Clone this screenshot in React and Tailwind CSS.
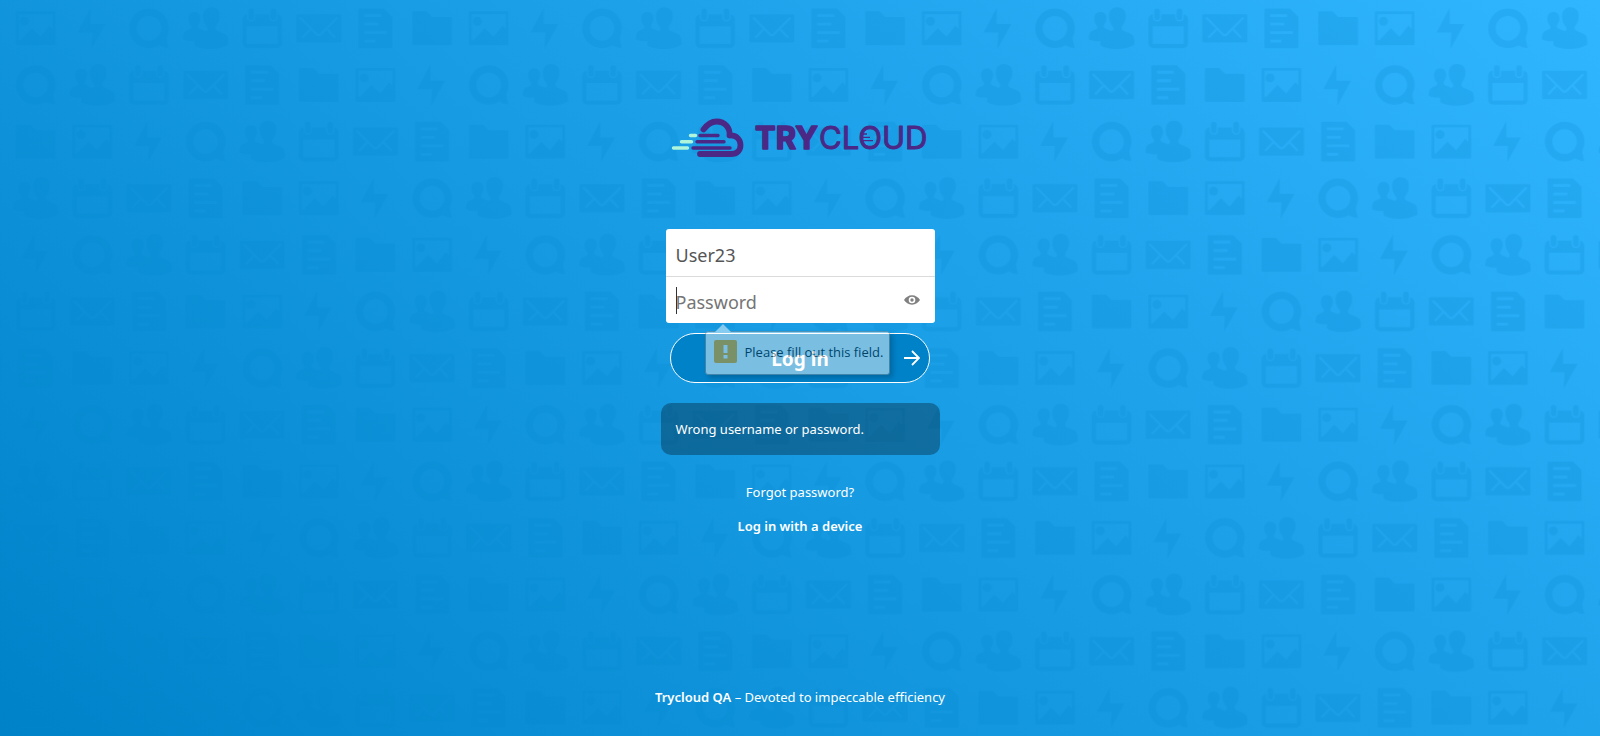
import React from "react";

const KINDS = ["image", "bolt", "talk", "contacts", "calendar", "mail", "doc", "folder"];
const ROW_OFFSETS = [0, 2, 7, 3, 1, 4, 6, 1, 3, 5, 7, 2, 6, 0, 4];
const COLS = 24;
const PATTERN_WIDTH = 1359;
const CELL = PATTERN_WIDTH / COLS;
const ICON_SCALE = CELL / 20;

function PatternIcons() {
  return (
    <>
      <path
        id="bg-image"
        fillRule="evenodd"
        d="M1.4 2h13.2q.4 0 .4.4v11.2q0 .4-.4.4H1.4q-.4 0-.4-.4V2.4q0-.4.4-.4ZM2 3v9.2h.6L6.6 8l3.1 3L12.9 7 14 8.2V3ZM4 3.9a1.6 1.6 0 1 0 .01 0Z"
      />
      <path id="bg-bolt" d="M7.4.8 2.8 9.5H8l-.3 5.8 4.9-8.8H7.4Z" />
      <path
        id="bg-talk"
        fillRule="evenodd"
        d="M8 1a7 7 0 1 0 3.7 12.95c1 .6 2.4 1 3.2.95.3-.2-.7-2-.6-3.8A7 7 0 0 0 8 1Zm0 2.65a4.35 4.35 0 1 1 0 8.7 4.35 4.35 0 0 1 0-8.7Z"
      />
      <path
        id="bg-contacts"
        d="M10 .6c2 0 3.1 1.3 3 3.2 0 1.5-.6 2.5-1.3 3.5-.3.6-.2 1.1.3 1.5 1.2.7 3 1 3.7 2 .3.9.4 2 .3 3-1.5 1-3.7 1.5-6.2 1.5-2.3 0-4.6-.4-5.7-1.3-.1-.5-.1-1 0-1.5-1.5.1-2.9-.1-4.1-.6 0-.9.1-1.8.5-2.5.7-.7 1.7-.8 2.4-1.3.3-.5-.1-1-.5-1.6-.3-.5-.5-1.1-.5-1.9 0-1.5.8-2.4 2.2-2.4 1.3 0 2.1.9 2.1 2.3 0 .9-.3 1.5-.7 2.1-.3.6-.4 1 .1 1.4.6.4 1.6.5 2.3 1 .6-.2 1-.5.7-1.3-.8-1.1-1.5-2.2-1.5-3.8C7.1 1.8 8.2.6 10 .6Z"
      />
      <mask id="cut-calendar">
        <rect width="16" height="16" fill="white" />
        <rect x="2.5" y="7.3" width="11" height="6.2" fill="black" />
        <rect x="2.6" y=".6" width="3" height="5" rx="1.5" fill="black" />
        <rect x="10.5" y=".6" width="3" height="5" rx="1.5" fill="black" />
      </mask>
      <g id="bg-calendar">
        <rect x="1" y="3" width="14" height="12" rx="1.8" mask="url(#cut-calendar)" />
        <rect x="3.1" y="1" width="2" height="4.1" rx="1" />
        <rect x="11" y="1" width="2" height="4.1" rx="1" />
      </g>
      <mask id="cut-mail">
        <rect width="16" height="16" fill="white" />
        <path
          d="M1.4 4.2 7.3 10.1Q8 10.7 8.7 10.1L14.6 4.2M5 8.4 2.2 11.3M11 8.4 13.8 11.3"
          fill="none"
          stroke="black"
          strokeWidth=".8"
        />
      </mask>
      <rect id="bg-mail" y="3" width="16" height="10" rx=".6" mask="url(#cut-mail)" />
      <path
        id="bg-doc"
        fillRule="evenodd"
        d="M2.4 1H11l3 3v10.6q0 .4-.4.4H2.4Q2 15 2 14.6V1.4Q2 1 2.4 1ZM4 3v1h6V3ZM4 6v1h5V6ZM4 9v1h8V9ZM4 12v1h4v-1Z"
      />
      <path id="bg-folder" d="M1.4 2H6l2 2h6.6q.4 0 .4.4v9.2q0 .4-.4.4H1.4Q1 14 1 13.6V2.4Q1 2 1.4 2Z" />
    </>
  );
}

function Background() {
  return (
    <svg className="absolute inset-0 h-full w-full" aria-hidden="true">
      <defs>
        <PatternIcons />
        <pattern id="bg-pattern" width={PATTERN_WIDTH} height={CELL * ROW_OFFSETS.length} patternUnits="userSpaceOnUse" x="7.4">
          <g fill="#0082c9" opacity=".19">
            {ROW_OFFSETS.map((offset, row) =>
              Array.from({ length: COLS }, (_, col) => (
                <use
                  key={`${row}-${col}`}
                  href={`#bg-${KINDS[(col + offset) % 8]}`}
                  transform={`translate(${(col + 0.1) * CELL} ${(row + 0.1) * CELL}) scale(${ICON_SCALE})`}
                />
              ))
            )}
          </g>
        </pattern>
      </defs>
      <rect width="100%" height="100%" fill="url(#bg-pattern)" />
    </svg>
  );
}

function Logo() {
  return (
    <svg viewBox="0 0 262 44" className="h-11 w-[262px]" role="img" aria-label="Trycloud">
      <g fill="none" strokeLinecap="round" stroke="#4b2885">
        <path
          strokeWidth="5.8"
          strokeLinejoin="round"
          d="M34.5 13.5C39 7.5 43 5.5 47.500 5.500C56 5.500 61.500 12 60.500 19.500C67.500 19 71.500 23.500 71.500 29C71.500 34.500 68 38 62 38H31"
        />
        <path strokeWidth="3.4" d="M31 19.5H49M28 25.7H55M24 32H61" />
      </g>
      <path
        fill="none"
        stroke="#aef5dc"
        strokeWidth="3.4"
        strokeLinecap="round"
        d="M21.500 19.500H26.500M12.500 25.700H22.500M4.500 32H18.500"
      />
      <g fill="#4b2885" stroke="#4b2885" strokeLinejoin="round" fontFamily="Inter, sans-serif" fontSize="31">
        <text x="86" y="32.5" fontWeight="700" strokeWidth="1.6">
          TRY
        </text>
        <text x="150" y="32.5" fontWeight="400" strokeWidth="1">
          CLOUD
        </text>
      </g>
      <path fill="none" stroke="#4b2885" strokeWidth="1.3" d="M193 18H198M193 21.300H201M193 24.600H204" />
    </svg>
  );
}

function EyeIcon() {
  return (
    <svg viewBox="0 0 16 16" className="size-4">
      <path
        fill="#808080"
        fillRule="evenodd"
        d="M8 3.3C4.5 3.3 1.6 5.4 0 8c1.6 2.6 4.5 4.7 8 4.7s6.4-2.1 8-4.7C14.4 5.4 11.5 3.3 8 3.3Zm0 1.4a3.3 3.3 0 1 1 0 6.6 3.3 3.3 0 0 1 0-6.6Zm0 1.6a1.7 1.7 0 1 0 0 3.4 1.7 1.7 0 0 0 0-3.4Z"
      />
    </svg>
  );
}

function ValidationTip() {
  return (
    <div role="alert" className="absolute top-full left-[39px] z-10 w-[185px] pt-2 font-['Open_Sans',sans-serif] opacity-[.48]">
      <svg viewBox="0 0 16 8" className="absolute top-px left-[10px] h-2 w-4">
        <path d="M0 8 8 0l8 8Z" fill="white" />
      </svg>
      <div className="flex h-[44px] items-start gap-2 rounded-[3px] border border-[#8a8a8a] bg-white pt-2 pl-2 text-[13px] leading-6 whitespace-nowrap text-black shadow-[3px_3px_5px_rgba(0,0,0,0.4)]">
        <svg viewBox="0 0 23 23" className="size-[23px] shrink-0">
          <rect width="23" height="23" rx="2" fill="#fea200" />
          <path d="M9.5 5h4v8h-4ZM9.5 15h4v3.5h-4Z" fill="white" />
        </svg>
        Please fill out this field.
      </div>
    </div>
  );
}

function LoginForm() {
  return (
    <form className="flex w-[269px] flex-col items-center" onSubmit={(e) => e.preventDefault()}>
      <div className="relative w-full rounded-[3px] bg-white text-[18px]">
        <input
          id="user"
          type="text"
          aria-label="Username or email"
          defaultValue="User23"
          className="block h-12 w-full border-b border-[#dbdbdb] bg-transparent px-[10px] pt-1 text-[#555] outline-none"
        />
        <div className="relative flex h-[46px] items-center">
          <span className="absolute top-[10px] left-[10px] h-[27px] w-px bg-[#333]" />
          <input
            id="password"
            type="password"
            aria-label="Password"
            placeholder="Password"
            required
            className="h-full min-w-0 flex-1 bg-transparent pt-1 pl-[10px] text-[#555] outline-none placeholder:text-[#757575]"
          />
          <button type="button" aria-label="Toggle password visibility" className="mr-[15px]">
            <EyeIcon />
          </button>
        </div>
        <ValidationTip />
      </div>
      <button
        type="submit"
        className="relative mt-[10px] h-[50px] w-[260px] rounded-full border border-white bg-[#0082c9] pt-[2px] text-[19px] font-bold text-white"
      >
        Log in
        <svg viewBox="0 0 16 16" className="absolute top-4 right-[9px] size-4" fill="none" stroke="white" strokeWidth="1.8">
          <path d="M0 8H15M8 1l7 7-7 7" />
        </svg>
      </button>
    </form>
  );
}

export default function App() {
  return (
    <div className="relative min-h-screen bg-[linear-gradient(40deg,#0082c9_0%,#30b6ff_100%)] font-['Noto_Sans',sans-serif] text-[13px] text-white">
      <Background />
      <div className="relative flex min-h-screen flex-col items-center">
        <header className="pt-[116px] pb-[69px]">
          <Logo />
        </header>
        <main className="flex flex-1 flex-col items-center">
          <LoginForm />
          <p className="mt-5 w-[279px] rounded-[10px] bg-black/30 px-[15px] py-4 leading-5">Wrong username or password.</p>
          <a href="#forgot" className="mt-[27px] leading-5">
            Forgot password?
          </a>
          <a href="#device" className="mt-[14px] leading-5 font-semibold">
            Log in with a device
          </a>
        </main>
        <footer className="pt-8 pb-[29px] leading-5">
          <a href="#home" className="font-semibold">
            Trycloud QA
          </a>{" "}
          – Devoted to impeccable efficiency
        </footer>
      </div>
    </div>
  );
}
